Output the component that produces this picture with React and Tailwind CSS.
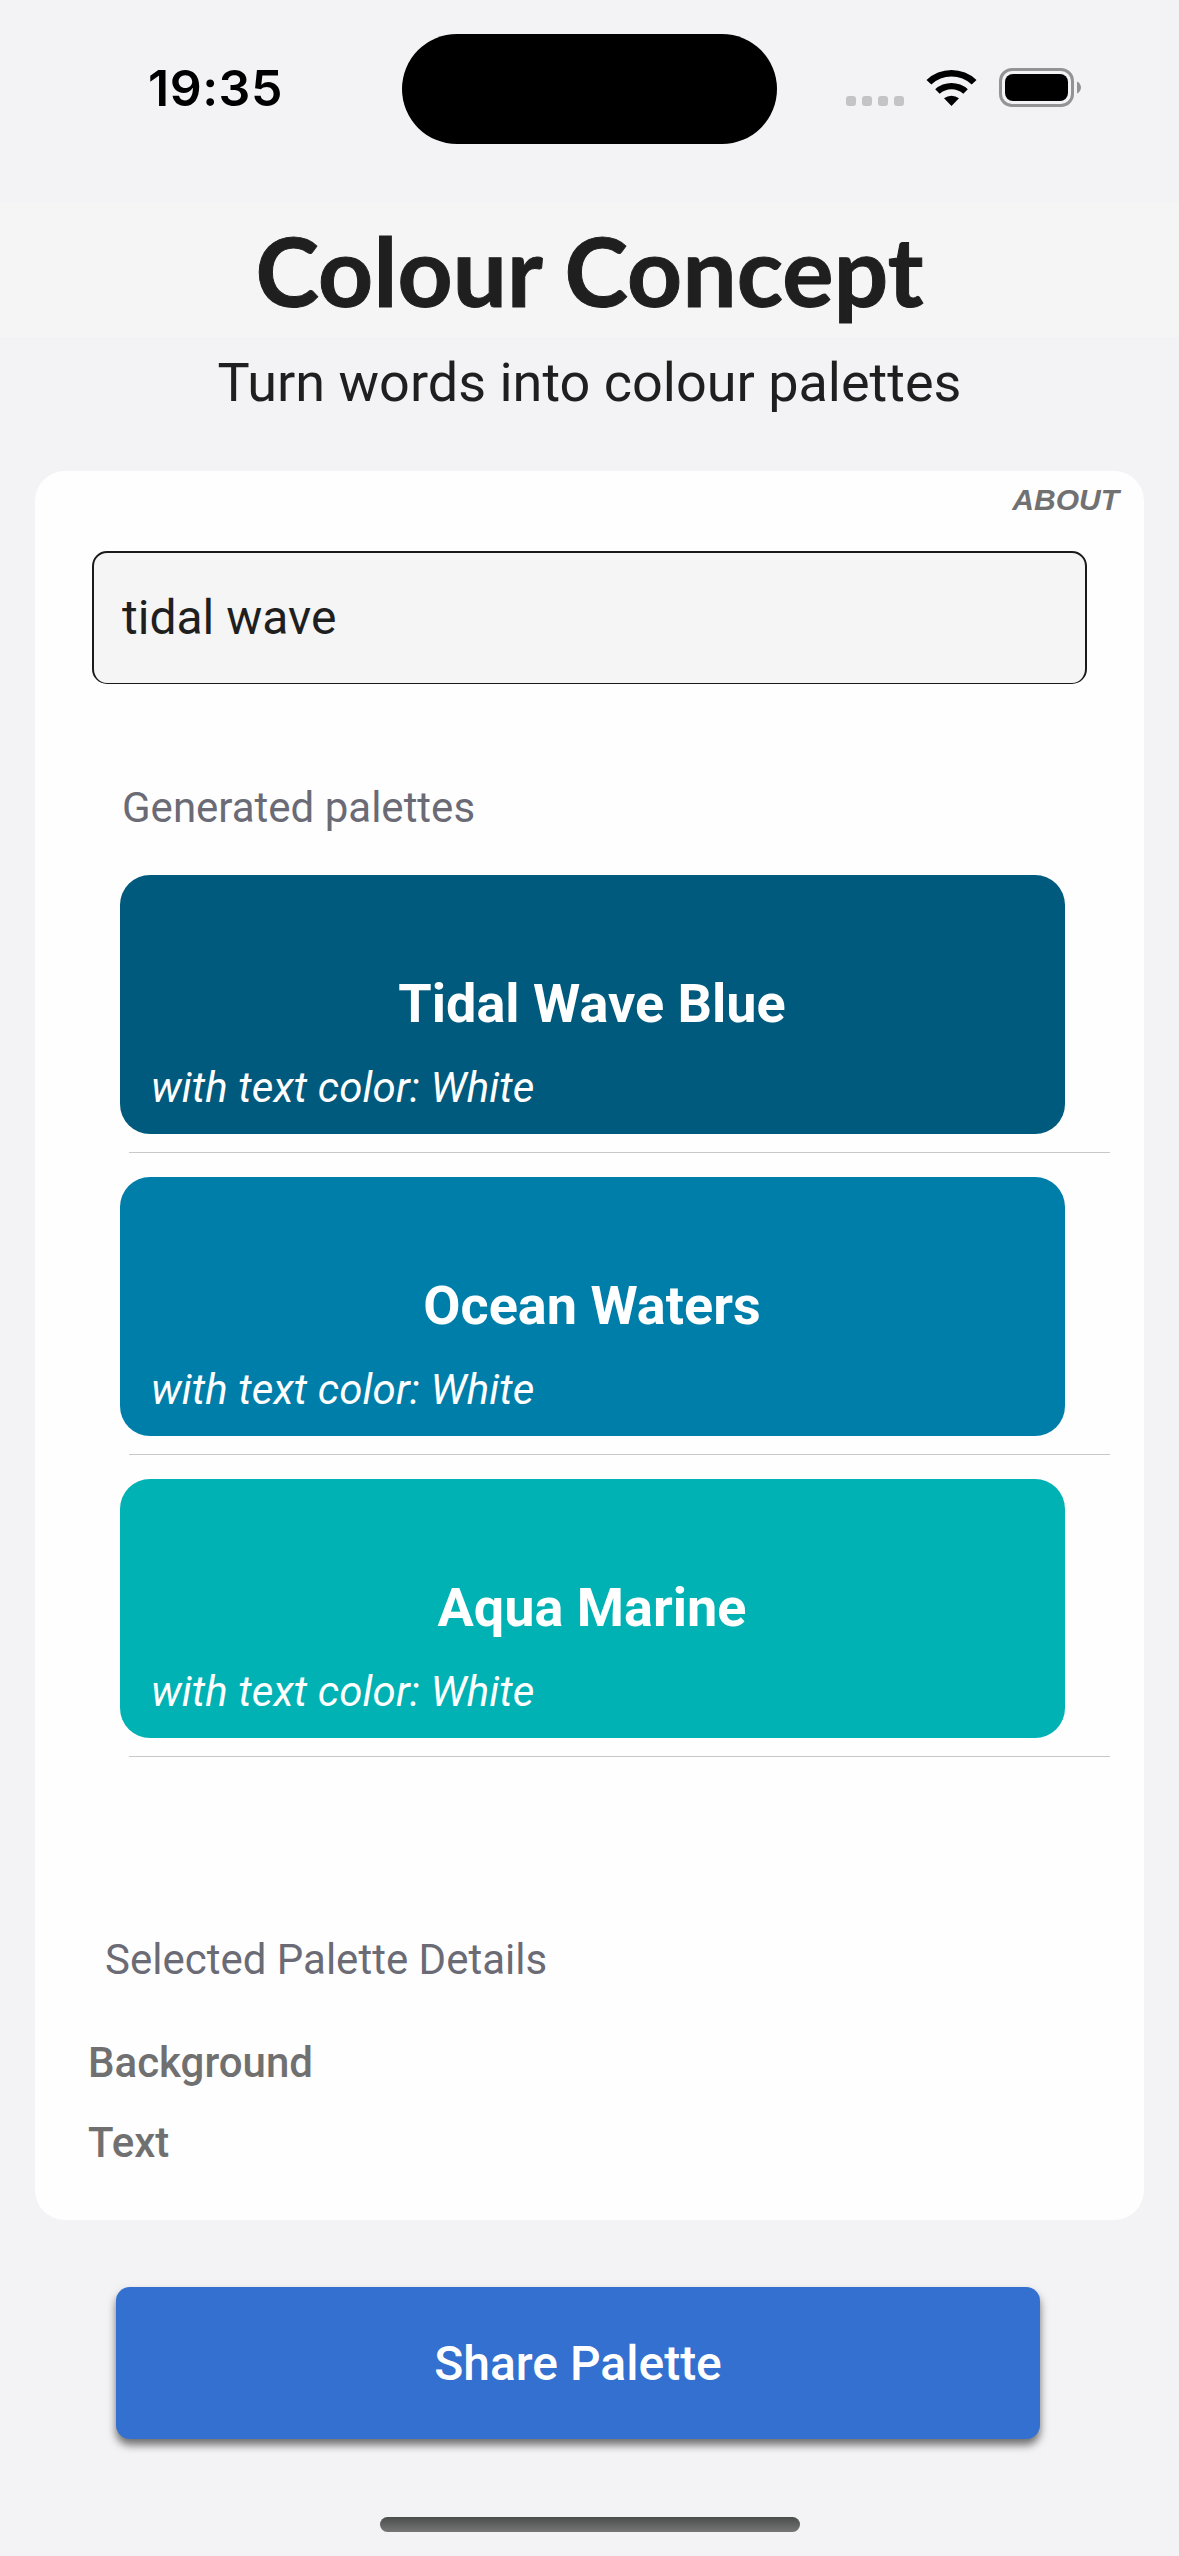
import React, { useState } from "react";

const palettes = [
  { name: "Tidal Wave Blue", textColor: "White", bg: "bg-[#005a7d]" },
  { name: "Ocean Waters", textColor: "White", bg: "bg-[#007eaa]" },
  { name: "Aqua Marine", textColor: "White", bg: "bg-[#00b2b4]" },
];

function WifiIcon() {
  return (
    <svg width="51" height="38" viewBox="0 0 51 38" fill="#000">
      <path d="M0.5 11 A36 36 0 0 1 50.5 11 L45.7 15.5 A29.5 29.5 0 0 0 5.3 15.5 Z" />
      <path d="M9.2 20.3 A24 24 0 0 1 41.8 20.3 L37.3 24.8 A17.5 17.5 0 0 0 13.7 24.8 Z" />
      <path d="M18 29.2 A12.5 12.5 0 0 1 33 29.2 L25.5 37 Z" />
    </svg>
  );
}

function BatteryIcon() {
  return (
    <svg width="83" height="40" viewBox="0 0 83 40">
      <rect x="1.5" y="1.5" width="72" height="36" rx="11.5" fill="none" stroke="#939395" strokeWidth="3" />
      <rect x="6" y="6" width="63" height="27" rx="8" fill="#000" />
      <path d="M78 13.5 C80.5 14.5 82 17 82 19.5 C82 22 80.5 24.5 78 25.5 Z" fill="#939395" />
    </svg>
  );
}

function StatusBar() {
  return (
    <div className="flex h-[202px] items-start">
      <div className="mt-[58px] ml-[148px] w-[254px] font-['Inter',sans-serif] text-[50px] leading-[60px] font-semibold tracking-[0.5px] text-black">
        19:35
      </div>
      <div className="mt-[34px] h-[110px] w-[375px] rounded-full bg-black" />
      <div className="mt-[96px] ml-[69px] flex gap-[6px]">
        {[1, 2, 3, 4].map((dot) => (
          <span key={dot} className="h-[10px] w-[10px] rounded-[3px] bg-[#c4c4c6]" />
        ))}
      </div>
      <div className="mt-[69px] ml-[22px]">
        <WifiIcon />
      </div>
      <div className="mt-[68px] ml-[22px]">
        <BatteryIcon />
      </div>
    </div>
  );
}

function PaletteRow({ palette }) {
  return (
    <li className="h-[302px]">
      <div
        className={`flex h-[259px] w-[945px] flex-col rounded-[30px] text-white ${palette.bg}`}
      >
        <h3 className="mt-[97px] pr-px text-center text-[54px] leading-[64px] font-bold">
          {palette.name}
        </h3>
        <p className="mt-[27px] ml-[31px] text-[42px] leading-[50px] tracking-[0.13px] italic">
          with text color: {palette.textColor}
        </p>
      </div>
      <div className="mt-[18px] ml-[9px] h-px w-[981px] bg-[#c8c8ca]" />
    </li>
  );
}

export default function App() {
  const [words, setWords] = useState("tidal wave");

  return (
    <div className="flex h-[2556px] w-[1179px] flex-col bg-[#f3f3f6] font-['Roboto',sans-serif] text-[#1f1f1f]">
      <StatusBar />

      {/* Heading */}
      <header className="h-[269px] text-center">
        <h1 className="h-[135px] bg-[#f5f5f5] font-['Lato',sans-serif] text-[96px] leading-[135px] font-bold tracking-[0.15px] [-webkit-text-stroke:1px_#1f1f1f]">
          Colour Concept
        </h1>
        <p className="mt-[14px] text-[54px] leading-[64px]">
          Turn words into colour palettes
        </p>
      </header>

      {/* Palette card */}
      <main className="ml-[35px] flex h-[1749px] w-[1109px] flex-col rounded-[30px] bg-[#fefefe]">
        <button className="mt-[11px] mr-[25px] h-[36px] self-end font-['Liberation_Sans',sans-serif] text-[30px] leading-[36px] font-bold text-[#717171] italic">
          ABOUT
        </button>

        <input
          type="text"
          value={words}
          onChange={(e) => setWords(e.target.value)}
          className="mt-[33px] ml-[57px] h-[133px] w-[995px] rounded-[15px] border-2 border-b border-[#1a1a1a] bg-[#f5f5f5] pb-[2px] pl-[28px] text-[48px]"
        />

        <h2 className="mt-[99px] ml-[87px] text-[42px] leading-[50px] text-[#6b6b76]">
          Generated palettes
        </h2>
        <ul className="mt-[42px] ml-[85px]">
          {palettes.map((palette) => (
            <PaletteRow key={palette.name} palette={palette} />
          ))}
        </ul>

        <h2 className="mt-[154px] ml-[70px] text-[42px] leading-[50px] text-[#6b6b76]">
          Selected Palette Details
        </h2>
        <div className="mt-[38px] ml-[53px] text-[42px] leading-[80px] font-medium text-[#707070]">
          <p>Background</p>
          <p>Text</p>
        </div>
      </main>

      <button className="mt-[67px] ml-[116px] h-[152px] w-[924px] rounded-[14px] bg-[#3370cf] pt-[2px] text-[48px] font-medium text-white shadow-[0_6px_9px_rgba(0,0,0,0.55)]">
        Share Palette
      </button>

      {/* Home indicator */}
      <div className="mt-[78px] ml-[380px] h-[15px] w-[420px] rounded-full bg-linear-to-b from-[#4b4d4c] to-[#767676]" />
    </div>
  );
}
